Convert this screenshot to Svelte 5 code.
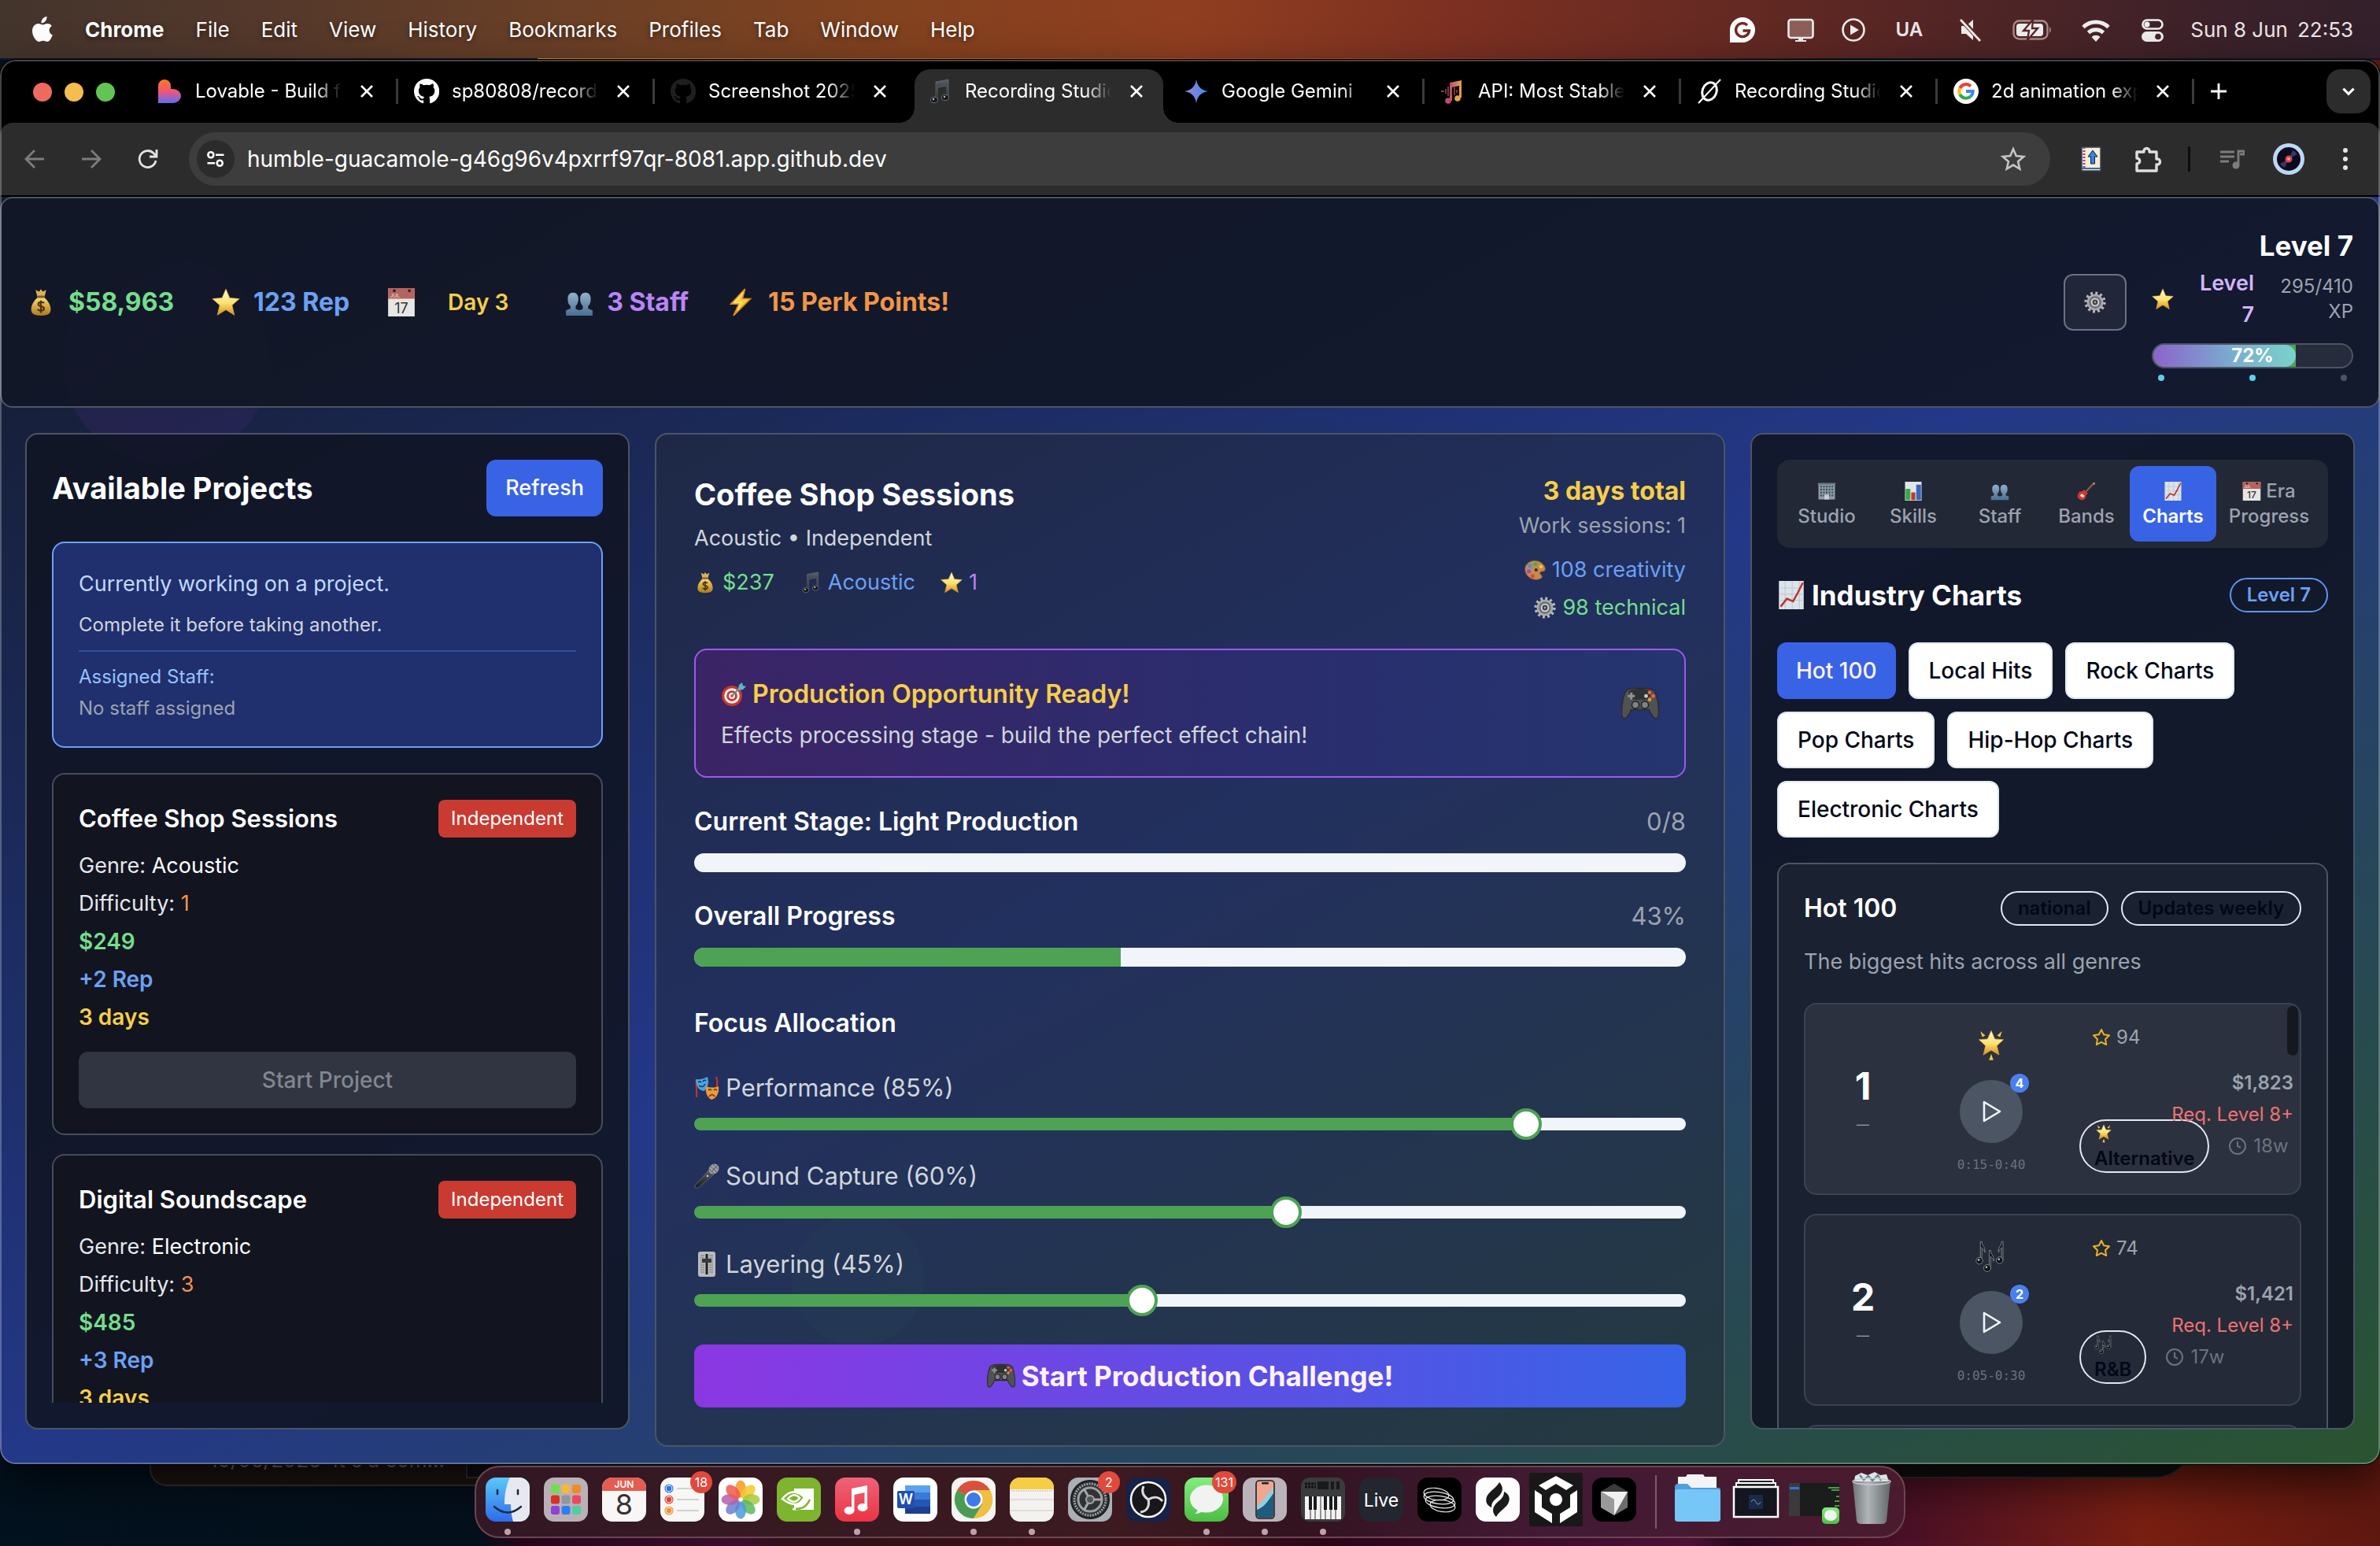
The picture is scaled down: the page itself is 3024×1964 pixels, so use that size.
<script>
  const menus = ['File', 'Edit', 'View', 'History', 'Bookmarks', 'Profiles', 'Tab', 'Window', 'Help'];

  const tabs = [
    { icon: 'lovable', title: 'Lovable - Build for' },
    { icon: 'github', title: 'sp80808/recording' },
    { icon: 'github-dim', title: 'Screenshot 2025-06' },
    { icon: 'note', title: 'Recording Studio Ty', active: true },
    { icon: 'gemini', title: 'Google Gemini' },
    { icon: 'note-color', title: 'API: Most Stable Di' },
    { icon: 'slash', title: 'Recording Studio Ty' },
    { icon: 'google', title: '2d animation explor' }
  ];

  const projects = [
    { title: 'Coffee Shop Sessions', genre: 'Acoustic', difficulty: 1, pay: '$249', rep: '+2 Rep', days: '3 days' },
    { title: 'Digital Soundscape', genre: 'Electronic', difficulty: 3, pay: '$485', rep: '+3 Rep', days: '3 days' }
  ];

  let sliders = $state([
    { id: 'performance', icon: 'masks', label: 'Performance', value: 85 },
    { id: 'capture', icon: 'mic', label: 'Sound Capture', value: 60 },
    { id: 'layering', icon: 'fader', label: 'Layering', value: 45 }
  ]);

  const sections = [
    { icon: 'building', label: 'Studio' },
    { icon: 'bars', label: 'Skills' },
    { icon: 'people', label: 'Staff' },
    { icon: 'guitar', label: 'Bands' },
    { icon: 'chart', label: 'Charts', active: true },
    { icon: 'calendar', label: 'Progress', lead: 'Era' }
  ];

  const charts = ['Hot 100', 'Local Hits', 'Rock Charts', 'Pop Charts', 'Hip-Hop Charts', 'Electronic Charts'];

  const entries = [
    { rank: 1, art: 'glow', badge: 4, time: '0:15-0:40', score: 94, price: '$1,823', genre: 'Alternative', weeks: '18w', top: true },
    { rank: 2, art: 'notes', badge: 2, time: '0:05-0:30', score: 74, price: '$1,421', genre: 'R&B', weeks: '17w' },
    { rank: 3, art: 'glow', badge: 3, time: '0:10-0:35', score: 71, price: '$1,305', genre: 'Pop', weeks: '12w' }
  ];

  const dock = [
    { id: 'finder', open: true },
    { id: 'launchpad' },
    { id: 'cal' },
    { id: 'reminders', badge: '18' },
    { id: 'photos' },
    { id: 'nvidia' },
    { id: 'music', open: true },
    { id: 'word' },
    { id: 'chrome', open: true },
    { id: 'notesapp', open: true },
    { id: 'settings', badge: '2' },
    { id: 'obs' },
    { id: 'messages', badge: '131', open: true },
    { id: 'iphone', open: true },
    { id: 'midi', open: true },
    { id: 'live' },
    { id: 'rings' },
    { id: 'splice' },
    { id: 'hexa' },
    { id: 'cursor' }
  ];
  const dockRight = ['folder', 'stack', 'miniwin', 'trash'];
  const petals = [
    ['#f59a23', 0], ['#f2c928', 45], ['#a9c93b', 90], ['#5cb85f', 135],
    ['#4a9bdc', 180], ['#6d7fd0', 225], ['#b45fae', 270], ['#ec5a4c', 315]
  ];
  const padTiles = ['#6ee04f', '#f5b83a', '#ef8b2c', '#d93025', '#8d979f', '#f0465c', '#9340d6', '#2f7df2', '#4fcfa0'];
</script>

{#snippet ico(id, size)}
  <svg class="ico {size}" viewBox="0 0 32 32" aria-hidden="true"><use href="#{id}" /></svg>
{/snippet}

<svg class="sprite" aria-hidden="true">
  <defs>
    <linearGradient id="gGold" x1="0" y1="0" x2="0" y2="1"><stop offset="0" stop-color="#f6dc8a" /><stop offset=".5" stop-color="#d7a83f" /><stop offset="1" stop-color="#a97b24" /></linearGradient>
    <linearGradient id="gStar" x1="0" y1="0" x2="0" y2="1"><stop offset="0" stop-color="#fffbe0" /><stop offset=".55" stop-color="#fbe06a" /><stop offset="1" stop-color="#d98a1e" /></linearGradient>
    <linearGradient id="gPeople" x1="0" y1="0" x2="0" y2="1"><stop offset="0" stop-color="#93b0c9" /><stop offset="1" stop-color="#4a6f92" /></linearGradient>
    <linearGradient id="gLov" x1="0" y1="0" x2="0" y2="1"><stop offset="0" stop-color="#ff7a1a" /><stop offset=".5" stop-color="#f0567a" /><stop offset="1" stop-color="#5d6cf5" /></linearGradient>
    <linearGradient id="gGem" x1="0" y1="0" x2="1" y2="0"><stop offset="0" stop-color="#9a7fd6" /><stop offset="1" stop-color="#3f8ef0" /></linearGradient>
    <linearGradient id="gNote" x1="0" y1="0" x2="1" y2="0"><stop offset="0" stop-color="#c04a70" /><stop offset="1" stop-color="#e8a04a" /></linearGradient>
    <linearGradient id="gDark" x1="0" y1="0" x2="0" y2="1"><stop offset="0" stop-color="#5a6068" /><stop offset="1" stop-color="#15181c" /></linearGradient>
    <linearGradient id="gFinder" x1="0" y1="0" x2="0" y2="1"><stop offset="0" stop-color="#5ac8fa" /><stop offset="1" stop-color="#2f6bea" /></linearGradient>
    <linearGradient id="gMusic" x1="0" y1="0" x2="0" y2="1"><stop offset="0" stop-color="#f0637a" /><stop offset="1" stop-color="#ea3342" /></linearGradient>
    <linearGradient id="gGreen" x1="0" y1="0" x2="0" y2="1"><stop offset="0" stop-color="#83ee80" /><stop offset="1" stop-color="#4dbd43" /></linearGradient>
    <linearGradient id="gTrash" x1="0" y1="0" x2="1" y2="0"><stop offset="0" stop-color="#6f7478" /><stop offset=".4" stop-color="#b0b5b8" /><stop offset="1" stop-color="#63676a" /></linearGradient>

    <symbol id="moneybag" viewBox="0 0 32 32"><path d="M10 2l4 2 2-3 2 3 4-2-2 8h-8z" fill="#d9b35a" /><path d="M13 10h6c5 4 8 9 8 14 0 5-3 7-11 7S5 29 5 24c0-5 3-10 8-14z" fill="url(#gGold)" /><rect x="12" y="8.500" width="8" height="2.500" rx="1" fill="#8a5a22" /><path d="M19.500 17c-.7-1.500-6.500-2-6.500 1.200 0 3 6.500 1.700 6.500 4.800 0 3.200-6.300 2.700-7 .8M16 14v14" fill="none" stroke="#4b3510" stroke-width="1.900" /></symbol>
    <symbol id="star" viewBox="0 0 32 32"><path d="M16 1l4.300 10 11 1-8.300 7.300 2.600 11.200L16 24.500l-9.600 6 2.600-11.200L.7 12l11-1z" fill="url(#gStar)" stroke="#e5a93a" stroke-width=".6" /></symbol>
    <symbol id="glow" viewBox="0 0 32 32"><path d="M16 1l3.700 8.500 8.800.6-6.700 6.300 2.200 9.300-8-4.800-8 4.800 2.200-9.300-6.700-6.300 8.800-.6z" fill="url(#gStar)" stroke="#e5a93a" stroke-width=".5" /><path d="M5 1.500l5 4.500-3 1.500zM27 1.500l-5 4.500 3 1.500zM16 24.500l2.200 6.500h-4.400z" fill="#f2c84b" /></symbol>
    <symbol id="calendar" viewBox="0 0 32 32"><rect x="1" y="0" width="30" height="32" fill="#e6e6e4" /><path d="M1 0h30v12H1z" fill="#b4645f" /><circle cx="8" cy="3" r="1.600" fill="#3b1c1c" /><circle cx="25" cy="3" r="1.600" fill="#3b1c1c" /><text x="3" y="11" font-family="Inter, sans-serif" font-size="6" fill="#f3dada">JUL</text><text x="16" y="28" text-anchor="middle" font-family="Inter, sans-serif" font-size="16" fill="#333">17</text></symbol>
    <symbol id="people" viewBox="0 0 32 32"><g fill="url(#gPeople)"><path d="M9 5c4 0 6 3 6 7s-1.500 7-3 8v3.500l4 1.500V31H1v-6l5-2v-3c-2-1-3-4-3-8s2-7 6-7z" /><path d="M23 5c4 0 6 3 6 7s-1 7-3 8v3l5 2v6H16v-6l4-1.500V20c-1.500-1-3-4-3-8s2-7 6-7z" /></g></symbol>
    <symbol id="bolt" viewBox="0 0 32 32"><path d="M21 1L5 18h9L8 31 27 12h-9z" fill="#f8cf3d" stroke="#e08a1e" stroke-width="1.500" /><path d="M19 5L9 16h7l-3 9" fill="none" stroke="#fff3a8" stroke-width="1" /></symbol>
    <symbol id="gear" viewBox="0 0 32 32"><circle cx="16" cy="16" r="13" fill="none" stroke="#b9bbbe" stroke-width="5" stroke-dasharray="3.200 3.600" /><circle cx="16" cy="16" r="12" fill="#a9abae" /><circle cx="16" cy="16" r="9" fill="#707276" /><circle cx="16" cy="16" r="5" fill="#3d4046" stroke="#d7d9db" stroke-width="2.200" /><circle cx="16" cy="16" r="1.600" fill="#9a9ca0" /></symbol>
    <symbol id="note" viewBox="0 0 32 32"><path d="M11 4l16-3v22.500h-2V9L13 11v16h-2z" fill="url(#gDark)" stroke="#6b7078" stroke-width=".7" /><ellipse cx="9" cy="27" rx="4.500" ry="3.600" fill="#15181c" stroke="#7b8088" stroke-width=".8" /><ellipse cx="23" cy="24" rx="4.500" ry="3.600" fill="#15181c" stroke="#7b8088" stroke-width=".8" /><circle cx="8" cy="26" r="1.200" fill="#b9bec6" /><circle cx="22" cy="23" r="1.200" fill="#b9bec6" /></symbol>
    <symbol id="notes" viewBox="0 0 32 32"><g fill="#111419" stroke="#7d838c" stroke-width=".8"><path d="M5 1h1.500c0 5 4 5 3 11-1-4-3-4-3-5v13H5zM28 1h-1.500c0 5-4 5-3 11 1-4 3-4 3-5v13H28zM14 10h1.500c0 5 4 5 3 11-1-4-3-4-3-5v12H14z" /><circle cx="4" cy="20.500" r="3.400" /><circle cx="24.500" cy="20" r="3.400" /><circle cx="12" cy="28" r="3.600" /></g><g fill="#c9ced6"><circle cx="3.300" cy="19.500" r="1" /><circle cx="23.800" cy="19" r="1" /><circle cx="11.200" cy="27" r="1" /></g></symbol>
    <symbol id="palette" viewBox="0 0 32 32"><path d="M13 3C4 5 0 12 3 20c3 8 13 12 20 9 6-2 3-5 1-7s1-4 4-4c4 0 4-5 1-9-4-5-10-7-16-6z" fill="#c88a4a" stroke="#9a6430" stroke-width="1" /><circle cx="9" cy="10" r="3" fill="#3f8ef0" /><circle cx="17" cy="7.500" r="3" fill="#45b04c" /><circle cx="25" cy="11.500" r="2.600" fill="#f2c53d" /><circle cx="7.500" cy="18" r="3" fill="#8a4fd0" /><circle cx="13" cy="25" r="3" fill="#e0483c" /><circle cx="18" cy="16" r="2.400" fill="#26304f" /></symbol>
    <symbol id="target" viewBox="0 0 32 32"><circle cx="14" cy="18" r="13" fill="#c8372c" /><circle cx="14" cy="18" r="9.800" fill="#f5efec" /><circle cx="14" cy="18" r="6.800" fill="#c8372c" /><circle cx="14" cy="18" r="4" fill="#f5efec" /><circle cx="14" cy="18" r="1.800" fill="#c8372c" /><path d="M14 18L26 6" stroke="#5b8b96" stroke-width="2" /><path d="M22 9l1-5 4-3 1 4 4 1-4 4-5 1z" fill="#57b6c9" /></symbol>
    <symbol id="gamepad" viewBox="0 0 32 32"><path d="M4 5c4-3 8-2 12-2s8-1 12 2c3 5 4 15 3.500 21-1 5-5 2-8-5h-15c-3 7-7 10-8 5C0 20 1 10 4 5z" fill="#505153" stroke="#2b2c2e" stroke-width="1" /><path d="M6 5.500c4-3 16-3 20 0l-3 7H9z" fill="#303133" /><path d="M8.500 6.500v6M5.500 9.500h6" stroke="#8f9193" stroke-width="2" /><circle cx="24" cy="6.500" r="1.600" fill="#f0603c" /><circle cx="27" cy="9.500" r="1.600" fill="#f0603c" /><circle cx="24" cy="12.500" r="1.600" fill="#e8903c" /><circle cx="21" cy="9.500" r="1.600" fill="#c8ccd0" /><circle cx="12" cy="17" r="3" fill="#808284" stroke="#222" /><circle cx="20" cy="17" r="3" fill="#808284" stroke="#222" /></symbol>
    <symbol id="masks" viewBox="0 0 32 32"><path d="M3 5c-1 8 1 14 0 23M28 2c3 6 0 12 1 20" fill="none" stroke="#b8392d" stroke-width="2.200" /><path d="M2 5c6 1 10-1 15-3 2 7 1 15-5 18C5 19 2 12 2 5z" fill="#4ba3e0" /><path d="M5 9q2-2 4 0M11 8q2-3 4-1M6 13q5 4 8-2" fill="none" stroke="#153a5a" stroke-width="1.500" /><path d="M15 14c5 2 10 2 16 0 1 8-2 15-9 17-6-3-8-10-7-17z" fill="#ee9a3a" /><path d="M18 19q2-2 4 0M25 19q2-2 4 0M19 27q4-5 7 0" fill="none" stroke="#5c3210" stroke-width="1.500" /></symbol>
    <symbol id="mic" viewBox="0 0 32 32"><path d="M19 8l6 6L5 31H1v-3z" fill="url(#gDark)" stroke="#6a6d72" stroke-width=".8" /><ellipse cx="25" cy="7" rx="7" ry="6" transform="rotate(-45 25 7)" fill="#9a9da1" /><path d="M19 7l6 6M20 3l9 8M24 1l6 6M22 11l8-9" stroke="#4c4f54" stroke-width=".9" /><circle cx="17" cy="16" r="1.200" fill="#dcdcdc" /></symbol>
    <symbol id="fader" viewBox="0 0 32 32"><rect x="5" y="0" width="22" height="32" rx="3" fill="#b9bcbd" /><path d="M8 5h5M8 8h5M8 11h5M8 14h5M8 17h5M8 20h5M8 23h5M8 26h5M19 5h5M19 8h5M19 11h5M19 14h5M19 17h5M19 20h5M19 23h5M19 26h5" stroke="#77797b" /><path d="M16 3v26" stroke="#222" stroke-width="3" /><rect x="10" y="9" width="12" height="5" rx="1" fill="#393b3d" /></symbol>
    <symbol id="building" viewBox="0 0 32 32"><path d="M2 3h28v27H2z" fill="#8e9da5" /><path d="M1 2h30v3H1z" fill="#697881" /><path d="M5 8h22M5 13h22M5 18h22M5 23h22" stroke="#3b515e" stroke-width="3" stroke-dasharray="3 1.800" /><path d="M12 22h8v8h-8z" fill="#c5cdd1" /></symbol>
    <symbol id="bars" viewBox="0 0 32 32"><path d="M2 0h28v32H2z" fill="#dfe6ea" /><path d="M3 12h8v19H3z" fill="#39a845" /><path d="M12.500 18h7v13h-7z" fill="#c8372c" /><path d="M21 5h8v26h-8z" fill="#3568b8" /></symbol>
    <symbol id="guitar" viewBox="0 0 32 32"><path d="M13 19L29 2" stroke="#8a6248" stroke-width="2.600" /><path d="M27 1l4 1-2 4z" fill="#c89f7c" /><path d="M4 17c3-2 4 1 7-3 2-1 3 1 3 3l3 1c2 1 2 3-1 4-2 3 0 6-4 8-6 3-12-2-11-7 1-3 2-4 3-6z" fill="#d5342f" /><path d="M8 20l5 4-3 3-5-3z" fill="#f0e4dc" /></symbol>
    <symbol id="chart" viewBox="0 0 32 32"><path d="M2 0h28v32H2z" fill="#dce4ea" /><path d="M2 8h28M2 15h28M2 22h28M9 0v32M17 0v32M25 0v32" stroke="#bcc8d0" /><path d="M4 29l7-9 7 3 5-9 6-12" fill="none" stroke="#c0322c" stroke-width="2.200" /></symbol>

    <symbol id="lovable" viewBox="0 0 32 32"><path d="M1 31V9a8 8 0 0 1 16 0v4h3a10 9 0 0 1 10 9 10 9 0 0 1-10 9z" fill="url(#gLov)" /></symbol>
    <symbol id="github" viewBox="0 0 32 32"><path fill="#fff" d="M16 0a16 16 0 0 0-5 31.200c.8.100 1.100-.4 1.100-.8v-3c-4.500 1-5.400-1.900-5.400-1.900-.7-1.900-1.800-2.400-1.800-2.400-1.400-1 .1-1 .1-1 1.600.100 2.500 1.700 2.500 1.700 1.400 2.400 3.700 1.700 4.700 1.300.1-1 .5-1.700 1-2.100-3.600-.4-7.300-1.800-7.300-7.900 0-1.800.6-3.200 1.700-4.300-.2-.4-.7-2 .1-4.200 0 0 1.400-.5 4.400 1.600a15 15 0 0 1 8 0c3-2.100 4.400-1.600 4.400-1.600.8 2.200.3 3.800.1 4.200 1 1.100 1.700 2.500 1.700 4.300 0 6.200-3.800 7.500-7.300 7.900.6.500 1.100 1.500 1.100 3v4.400c0 .4.300.9 1.100.8A16 16 0 0 0 16 0z" /></symbol>
    <symbol id="github-dim" viewBox="0 0 32 32"><g opacity=".12"><use href="#github" width="32" height="32" /></g></symbol>
    <symbol id="gemini" viewBox="0 0 32 32"><path d="M16 1c1.500 9 6 13.500 15 15-9 1.500-13.500 6-15 15-1.500-9-6-13.500-15-15 9-1.500 13.500-6 15-15z" fill="url(#gGem)" /></symbol>
    <symbol id="note-color" viewBox="0 0 32 32"><path d="M12 5l15-3v22h-3V9l-9 2v17h-3z" fill="url(#gNote)" /><circle cx="10" cy="28" r="3.800" fill="#c04a70" /><circle cx="22" cy="25" r="3.800" fill="#e8a04a" /><path d="M1 16h4M7 13v6M10 10v12M14 13v8M18 11v10M21 14v4" stroke="#a8505a" stroke-width="1.400" /></symbol>
    <symbol id="slash" viewBox="0 0 32 32"><path d="M30 1L2 31" stroke="#fff" stroke-width="2" /><ellipse cx="16" cy="16" rx="9" ry="11.500" transform="rotate(20 16 16)" fill="none" stroke="#fff" stroke-width="3" /></symbol>
    <symbol id="google" viewBox="0 0 32 32"><circle cx="16" cy="16" r="16" fill="#fff" /><g fill="none" stroke-width="4"><path d="M22 9.500A8.700 8.700 0 0 0 8.200 12" stroke="#ea4335" /><path d="M8.200 12a8.700 8.700 0 0 0 0 8" stroke="#fbbc05" /><path d="M8.200 20a8.700 8.700 0 0 0 13.600 2.500" stroke="#34a853" /><path d="M21.800 22.500A8.500 8.500 0 0 0 24.700 16H16" stroke="#4285f4" /></g></symbol>
  </defs>
</svg>

<div class="desktop">
  <header class="menubar">
    <nav class="menus" aria-label="Application menu">
      <svg class="apple" viewBox="0 0 28 34" aria-hidden="true"><path fill="#fff" d="M19.500 0c.3 2.400-.7 4.400-2 5.900-1.400 1.500-3.200 2.500-5 2.300-.3-2.200.8-4.400 2-5.700C15.800 1.100 17.900.1 19.500 0zM25.800 12c-2 1.300-3.200 3-3.200 5.400 0 2.800 1.700 5 4.200 6-1 3-3.800 8.600-6.900 8.600-2 0-2.600-1.200-5-1.200S11.600 32 9.800 32C5.600 32 1 24.500 1 18.500 1 12.500 4.700 9 8.700 9c2.300 0 4.100 1.500 5.600 1.500C15.700 10.500 17.900 9 20.500 9c2.200 0 4.200 1.200 5.300 3z" /></svg>
      <a class="app" href="#chrome">Chrome</a>
      {#each menus as m}<a href="#{m}">{m}</a>{/each}
    </nav>
    <div class="status">
      <svg class="st g" viewBox="0 0 34 34" aria-hidden="true"><path d="M17 1a16 16 0 1 1 0 32H1V17A16 16 0 0 1 17 1z" fill="#fff" /><path d="M23 11a8.500 8.500 0 1 0 2.500 7h-8" fill="none" stroke="#6e2d22" stroke-width="3.400" /></svg>
      <svg class="st d" viewBox="0 0 34 34" aria-hidden="true"><rect x="1.500" y="4" width="31" height="23" rx="3" fill="#8c5f58" stroke="#eee" stroke-width="2.600" /><path d="M14 27h6v3h4v2H10v-2h4z" fill="#eee" /></svg>
      <svg class="st p" viewBox="0 0 34 34" aria-hidden="true"><circle cx="17" cy="17" r="13.500" fill="none" stroke="#eee" stroke-width="2.600" /><path d="M13 10.500L24 17l-11 6.500z" fill="#eee" /></svg>
      <span class="ua">UA</span>
      <svg class="st m" viewBox="0 0 34 34" aria-hidden="true"><path d="M5 12h6l9-8v26l-9-8H5z" fill="#eee" /><path d="M4 3l26 28" stroke="#5d2823" stroke-width="6" /><path d="M4 4l25 27" stroke="#eee" stroke-width="2.600" /></svg>
      <svg class="st b" viewBox="0 0 52 34" aria-hidden="true"><rect x="1.500" y="5.500" width="43" height="23" rx="7" fill="none" stroke="#a98a86" stroke-width="2.400" /><path d="M47 13q4 4 0 8z" fill="#a98a86" /><rect x="5" y="9" width="34" height="16" rx="4" fill="#eee" /><path d="M26 4L14 18h7l-2 12 13-15h-7z" fill="#eee" stroke="#57252a" stroke-width="2.400" /></svg>
      <svg class="st w" viewBox="0 0 36 34" aria-hidden="true"><g fill="none" stroke="#eee" stroke-width="5"><path d="M2 13.500a23 23 0 0 1 32 0" /><path d="M8.500 20.500a14 14 0 0 1 19 0" /></g><path d="M18 32l-5.500-6a8 8 0 0 1 11 0z" fill="#eee" /></svg>
      <svg class="st c" viewBox="0 0 28 34" aria-hidden="true"><rect x="1.500" y="4.500" width="25" height="11" rx="5.500" fill="none" stroke="#eee" stroke-width="2.600" /><circle cx="7" cy="10" r="3.500" fill="#eee" /><rect x="0" y="19" width="28" height="13" rx="6.500" fill="#eee" /><circle cx="21" cy="25.500" r="3.800" fill="#4b2428" /></svg>
      <time class="clock"><span>Sun 8 Jun</span><span>22:53</span></time>
    </div>
  </header>

  <div class="back-note"><span>10/06/2025&nbsp; It's a com…</span></div>
  <div class="back-window"></div>

  <div class="window">
    <div class="tabstrip">
      <div class="lights"><i class="red"></i><i class="amber"></i><i class="green"></i></div>
      {#each tabs as t, i}
        <div class="tab" class:active={t.active} class:nosep={t.active || tabs[i + 1]?.active}>
          {@render ico(t.icon, 'i32')}
          <span class="tab-title">{t.title}</span>
          <button class="close" aria-label="Close tab"><svg viewBox="0 0 20 20" aria-hidden="true"><path d="M3 3l14 14M17 3L3 17" stroke="#fff" stroke-width="2.600" /></svg></button>
        </div>
      {/each}
      <button class="newtab" aria-label="New tab"><svg viewBox="0 0 22 22" aria-hidden="true"><path d="M11 1v20M1 11h20" stroke="#fff" stroke-width="2.800" /></svg></button>
      <button class="tabmenu" aria-label="Search tabs"><svg viewBox="0 0 20 20" aria-hidden="true"><path d="M4 7l6 6 6-6" fill="none" stroke="#fff" stroke-width="2.800" /></svg></button>
    </div>

    <div class="toolbar">
      <button class="nav dim" aria-label="Back"><svg viewBox="0 0 32 32" aria-hidden="true"><path d="M28 16H6M16 5L5 16l11 11" /></svg></button>
      <button class="nav dim" aria-label="Forward"><svg viewBox="0 0 32 32" aria-hidden="true"><path d="M4 16h22M16 5l11 11-11 11" /></svg></button>
      <button class="nav" aria-label="Reload"><svg viewBox="0 0 32 32" aria-hidden="true"><path d="M26 18a10.500 10.500 0 1 1-3-9.500l4 4M27 4v9h-9" /></svg></button>
      <div class="omnibox">
        <button class="tune" aria-label="Site settings"><svg viewBox="0 0 32 32" aria-hidden="true"><g fill="none" stroke="#fff" stroke-width="3"><circle cx="9" cy="10" r="4" /><path d="M16 10h12M4 22h11" /><circle cx="22" cy="22" r="4" /></g></svg></button>
        <input type="text" aria-label="Address" value="humble-guacamole-g46g96v4pxrrf97qr-8081.app.github.dev" />
        <button class="fav" aria-label="Bookmark"><svg viewBox="0 0 32 32" aria-hidden="true"><path d="M16 4l3.500 8.300 9 .8-6.800 5.900 2.100 8.800-7.800-4.700-7.800 4.700 2.100-8.800-6.800-5.900 9-.8z" fill="none" stroke="#c6c6c6" stroke-width="2.400" /></svg></button>
      </div>
      <div class="ext">
        <svg class="e1" viewBox="0 0 32 32" aria-hidden="true"><rect x="4" y="1" width="24" height="30" fill="#f8ecd6" stroke="#345" stroke-width="1.500" /><path d="M7 1v26" stroke="#8a4a80" stroke-width="3" stroke-dasharray="2 2" /><path d="M4 28h24" stroke="#3a6ea5" stroke-width="2" /><path d="M18 5l6 8h-3.500v9h-5v-9H12z" fill="#2f86e8" stroke="#123" stroke-width="1" /></svg>
        <svg class="e2" viewBox="0 0 36 36" aria-hidden="true"><path d="M4 9h9c-1-6 8-6 7 0h9v9c6-1 6 8 0 7v8H4v-9c5 0 5-7 0-7z" fill="none" stroke="#dedede" stroke-width="3.400" stroke-linejoin="round" /></svg>
        <i class="rule"></i>
        <svg class="e3" viewBox="0 0 32 32" aria-hidden="true"><path d="M1 7h18M1 13h18M1 19h11" stroke="#7c7c7c" stroke-width="2.800" /><circle cx="21" cy="24" r="4.500" fill="#7c7c7c" /><path d="M24 24V6h7v4h-5" fill="none" stroke="#7c7c7c" stroke-width="2.800" /></svg>
        <svg class="e4" viewBox="0 0 40 40" aria-hidden="true"><circle cx="20" cy="20" r="20" fill="#bcd8f7" /><circle cx="20" cy="20" r="15" fill="#0b0a1e" /><path d="M20 20l5-11a12 12 0 0 1 6 5zM20 20l-5 11a12 12 0 0 1-6-5z" fill="#39375a" /><circle cx="20" cy="20" r="4.500" fill="#d9405f" /><circle cx="20" cy="20" r="1.800" fill="#f8c05a" /></svg>
        <svg class="e5" viewBox="0 0 8 32" aria-hidden="true"><g fill="#e6e6e6"><circle cx="4" cy="5" r="3" /><circle cx="4" cy="16" r="3" /><circle cx="4" cy="27" r="3" /></g></svg>
      </div>
    </div>

    <div class="page">
      <i class="orb one"></i>
      <i class="orb two"></i>
      <header class="hud">
        <div class="stats">
          <div class="stat money">{@render ico('moneybag', 'i36')}<b>$58,963</b></div>
          <div class="stat rep">{@render ico('star', 'i36')}<b>123 Rep</b></div>
          <div class="stat day">{@render ico('calendar', 'i36')}<button>Day 3</button></div>
          <div class="stat staff">{@render ico('people', 'i36')}<b>3 Staff</b></div>
          <div class="stat perk">{@render ico('bolt', 'i36')}<b>15 Perk Points!</b></div>
        </div>
        <div class="level">
          <button class="cog" aria-label="Settings">{@render ico('gear', 'i28')}</button>
          <div class="level-box">
            <h2>Level 7</h2>
            <div class="level-row">
              {@render ico('star', 'i28')}
              <span class="lv">Level<br />7</span>
              <span class="xp">295/410<br />XP</span>
            </div>
            <div class="xpbar" role="progressbar" aria-valuenow="72" aria-label="Experience"><div class="xpunder" style="width:72%"><div class="xpfill"></div></div><span>72%</span></div>
            <div class="dots"><i></i><i></i><i class="off"></i></div>
          </div>
        </div>
      </header>

      <main>
        <section class="panel left">
          <div class="row head">
            <h2>Available Projects</h2>
            <button class="primary">Refresh</button>
          </div>
          <div class="scroller">
            <div class="working">
              <p class="w1">Currently working on a project.</p>
              <p class="w2">Complete it before taking another.</p>
              <div class="assigned">
                <p class="w3">Assigned Staff:</p>
                <p class="w4">No staff assigned</p>
              </div>
            </div>
            <div class="cards">
              {#each projects as p}
                <article class="card">
                  <div class="row">
                    <h3>{p.title}</h3>
                    <span class="tag">Independent</span>
                  </div>
                  <div class="facts">
                    <p>Genre: <span class="white">{p.genre}</span></p>
                    <p>Difficulty: <span class="orange">{p.difficulty}</span></p>
                    <p class="gain">{p.pay}</p>
                    <p class="blue">{p.rep}</p>
                    <p class="yellow">{p.days}</p>
                  </div>
                  <button class="start" disabled>Start Project</button>
                </article>
              {/each}
            </div>
          </div>
        </section>

        <section class="panel mid">
          <div class="mid-head">
            <div>
              <h2>Coffee Shop Sessions</h2>
              <p class="sub">Acoustic • Independent</p>
              <div class="chips">
                <span class="c-green">{@render ico('moneybag', 'i28')}$237</span>
                <span class="c-blue">{@render ico('note', 'i28')}Acoustic</span>
                <span class="c-purple">{@render ico('star', 'i28')}1</span>
              </div>
            </div>
            <div class="totals">
              <p class="total">3 days total</p>
              <p class="work">Work sessions: 1</p>
              <p class="cre">{@render ico('palette', 'i28')}108 creativity</p>
              <p class="tec">{@render ico('gear', 'i28')}98 technical</p>
            </div>
          </div>

          <div class="opportunity">
            <div>
              <h3>{@render ico('target', 'i32')}Production Opportunity Ready!</h3>
              <p>Effects processing stage - build the perfect effect chain!</p>
            </div>
            {@render ico('gamepad', 'i48')}
          </div>

          <div class="meter">
            <div class="row"><h4>Current Stage: Light Production</h4><span>0/8</span></div>
            <div class="bar" role="progressbar" aria-valuenow="0" aria-label="Current stage"><div style="width:0%"></div></div>
          </div>
          <div class="meter">
            <div class="row"><h4>Overall Progress</h4><span>43%</span></div>
            <div class="bar" role="progressbar" aria-valuenow="43" aria-label="Overall progress"><div style="width:43%"></div></div>
          </div>

          <h4 class="focus">Focus Allocation</h4>
          <div class="sliders">
            {#each sliders as s}
              <div class="slider">
                <label for={s.id}>{@render ico(s.icon, 'i32')}{s.label} ({s.value}%)</label>
                <input id={s.id} type="range" min="0" max="100" bind:value={s.value} style="--p:{s.value}%" />
              </div>
            {/each}
          </div>
          <button class="challenge">{@render ico('gamepad', 'i36')}Start Production Challenge!</button>
        </section>

        <section class="panel right">
          <nav class="sections">
            {#each sections as s}
              <button class:active={s.active}><span>{@render ico(s.icon, 'i24')}{s.lead ?? ''}</span><span>{s.label}</span></button>
            {/each}
          </nav>
          <div class="row charts-head">
            <h2>{@render ico('chart', 'i36')}Industry Charts</h2>
            <span class="pill level-pill">Level 7</span>
          </div>
          <div class="filters">
            {#each charts as c, i}<button class:on={i === 0}>{c}</button>{/each}
          </div>
          <div class="chart">
            <div class="row chart-title">
              <h3>Hot 100</h3>
              <div class="pills"><span class="pill">national</span><span class="pill">Updates weekly</span></div>
            </div>
            <p class="chart-sub">The biggest hits across all genres</p>
            <div class="entries">
              <i class="thumb"></i>
              {#each entries as e}
                <article class="entry" class:top={e.top}>
                  <div class="rank"><strong>{e.rank}</strong><span>—</span></div>
                  <div class="art">
                    {@render ico(e.art, 'i40')}
                    <button class="play" aria-label="Play preview">
                      <svg viewBox="0 0 32 32" aria-hidden="true"><path d="M7 4l20 12L7 28z" fill="none" stroke="#f1f5f9" stroke-width="2.600" stroke-linejoin="round" /></svg>
                      <i>{e.badge}</i>
                    </button>
                    <span class="time">{e.time}</span>
                  </div>
                  <div class="info">
                    <div class="score"><svg viewBox="0 0 24 24" aria-hidden="true"><path d="M12 2l3.100 6.300 6.900 1-5 4.900 1.200 6.900-6.200-3.300-6.200 3.300L7 14.200 2 9.300l6.900-1z" fill="none" stroke="#eab325" stroke-width="2" stroke-linejoin="round" /></svg>{e.score}</div>
                    <div class="meta">
                      <span class="genre">{@render ico(e.art, 'i24')}<span>{e.genre}</span></span>
                      <span class="weeks"><svg viewBox="0 0 24 24" aria-hidden="true"><g fill="none" stroke="#6b7280" stroke-width="2"><circle cx="12" cy="12" r="10" /><path d="M12 6v6l4 2" /></g></svg>{e.weeks}</span>
                    </div>
                  </div>
                  <div class="price"><b>{e.price}</b><span>Req. Level 8+</span></div>
                </article>
              {/each}
            </div>
          </div>
        </section>
      </main>
    </div>
  </div>

  <nav class="dock" aria-label="Dock">
    {#each dock as d}
      <button class="app-icon" class:open={d.open} aria-label={d.id}>
        <svg viewBox="0 0 56 56" aria-hidden="true">
          {#if d.id === 'finder'}
            <rect width="56" height="56" rx="13" fill="url(#gFinder)" /><path d="M31 0h12a13 13 0 0 1 13 13v30a13 13 0 0 1-13 13h-8c-2-7-3-14-3-22h-8c0-12 2-24 7-34z" fill="#e6eaf0" /><path d="M15 16v5M41 16v5" stroke="#1b2a44" stroke-width="2.600" stroke-linecap="round" /><path d="M11 37q17 15 34 0" fill="none" stroke="#1b2a44" stroke-width="2.400" stroke-linecap="round" />
          {:else if d.id === 'launchpad'}
            <rect width="56" height="56" rx="13" fill="#b9b1b6" />
            {#each padTiles as c, k}<rect x={9 + (k % 3) * 13.5} y={9 + Math.floor(k / 3) * 13.5} width="11" height="11" rx="3" fill={c} />{/each}
          {:else if d.id === 'cal'}
            <rect width="56" height="56" rx="13" fill="#f8f7f6" /><path d="M0 17V13A13 13 0 0 1 13 0h30a13 13 0 0 1 13 13v4z" fill="#e35d51" /><text x="28" y="13" text-anchor="middle" class="t-jun">JUN</text><text x="28" y="47" text-anchor="middle" class="t-8">8</text>
          {:else if d.id === 'reminders'}
            <rect width="56" height="56" rx="13" fill="#f7f7f5" /><path d="M21 14h28M21 28h28M21 42h28" stroke="#c4c6c8" stroke-width="1.500" />
            <g fill="#fff" stroke-width="1.200"><circle cx="11" cy="14" r="5" stroke="#2f74ea" /><circle cx="11" cy="28" r="5" stroke="#e0473a" /><circle cx="11" cy="42" r="5" stroke="#eb9234" /></g>
            <circle cx="11" cy="14" r="3.400" fill="#2f74ea" /><circle cx="11" cy="28" r="3.400" fill="#e0473a" /><circle cx="11" cy="42" r="3.400" fill="#eb9234" />
          {:else if d.id === 'photos'}
            <rect width="56" height="56" rx="13" fill="#fff" />
            {#each petals as [c, r]}<ellipse cx="28" cy="14.500" rx="7" ry="11" fill={c} opacity=".85" transform="rotate({r} 28 28)" />{/each}
          {:else if d.id === 'nvidia'}
            <rect width="56" height="56" rx="13" fill="#7db52e" /><path d="M22 14h25v27H22z" fill="#fff" /><path d="M7 27q13-16 28-2-9 17-28 2z" fill="#7db52e" stroke="#fff" stroke-width="2.500" /><path d="M14 27q8-9 15-1-6 9-15 1zM20 40q16 2 22-12" fill="none" stroke="#fff" stroke-width="2.500" /><path d="M24 40q13 0 18-12" fill="none" stroke="#7db52e" stroke-width="2.500" />
          {:else if d.id === 'music'}
            <rect width="56" height="56" rx="13" fill="url(#gMusic)" /><path d="M21 14l20-4v27h-3.500V19L24.500 22v20H21z" fill="#fff" /><ellipse cx="18" cy="42" rx="6.500" ry="5" fill="#fff" /><ellipse cx="35" cy="38" rx="6.500" ry="5" fill="#fff" />
          {:else if d.id === 'word'}
            <rect width="56" height="56" rx="13" fill="#fff" /><path d="M15 10h32v10H15z" fill="#5aa2ea" /><path d="M15 19h32v9H15z" fill="#3b79d8" /><path d="M15 28h32v9H15z" fill="#2457b5" /><path d="M15 37h32v9H15z" fill="#1c3f8f" /><rect x="5" y="17" width="22" height="22" rx="2" fill="#1f4fae" /><text x="16" y="34" text-anchor="middle" class="t-w">W</text>
          {:else if d.id === 'chrome'}
            <rect width="56" height="56" rx="13" fill="#f4f4f4" /><circle cx="28" cy="28" r="24" fill="#f0bf41" /><path d="M28 28L7.200 16A24 24 0 0 1 48.800 16z" fill="#d9503f" /><path d="M28 28L7.200 16A24 24 0 0 0 28 52l11-18z" fill="#4a9c54" /><path d="M48.800 16H28v12l11 6-11 18a24 24 0 0 0 20.800-36z" fill="#f0bf41" /><circle cx="28" cy="28" r="11.500" fill="#fff" /><circle cx="28" cy="28" r="9" fill="#3f7be8" />
          {:else if d.id === 'notesapp'}
            <rect width="56" height="56" rx="13" fill="#f3f2ee" /><path d="M0 15V13A13 13 0 0 1 13 0h30a13 13 0 0 1 13 13v2z" fill="#f6cd45" /><path d="M0 28h56M0 42h56" stroke="#c9c8c4" stroke-width="1" /><path d="M2 17h52" stroke="#a8a7a3" stroke-dasharray="1.500 1.500" />
          {:else if d.id === 'settings'}
            <rect width="56" height="56" rx="13" fill="#a9afb3" /><circle cx="28" cy="28" r="24" fill="#303234" stroke="#1c1d1f" stroke-width="2" /><circle cx="28" cy="28" r="20" fill="none" stroke="#a4a8ab" stroke-width="3" stroke-dasharray="1.800 1.500" /><circle cx="28" cy="28" r="15" fill="none" stroke="#9ba0a3" stroke-width="3" /><path d="M28 28h16M28 28L20 14M28 28l-8 14" stroke="#a4a8ab" stroke-width="3" /><circle cx="28" cy="28" r="5" fill="#54575a" stroke="#a4a8ab" stroke-width="2" />
          {:else if d.id === 'obs'}
            <rect width="56" height="56" rx="13" fill="#162248" /><circle cx="28" cy="28" r="22" fill="#17171c" stroke="#fff" stroke-width="2.500" /><g fill="none" stroke="#dcdcdc" stroke-width="3"><path d="M22 11c-3 7 0 13 6 17" /><path d="M46 30c-5-6-12-6-18-2" /><path d="M18 44c8-1 12-7 10-16" /></g>
          {:else if d.id === 'messages'}
            <rect width="56" height="56" rx="13" fill="url(#gGreen)" /><ellipse cx="28" cy="27" rx="21" ry="17.500" fill="#f1f3f1" /><path d="M17 38c0 4-1 6-4 8 6 0 9-2 11-5z" fill="#f1f3f1" />
          {:else if d.id === 'iphone'}
            <rect width="56" height="56" rx="13" fill="#bab4ba" /><rect x="17" y="4" width="23" height="48" rx="4" fill="#f0a690" stroke="#222" stroke-width="1.600" /><path d="M39 18v30q0 3-3 3H21q-3 0-3-3v-8c9-2 15-12 21-22z" fill="#1d5c7d" /><path d="M39 12v8c-7 10-12 18-21 21v-5c8-5 14-16 21-24z" fill="#8ed0e0" /><rect x="24" y="6" width="9" height="2.500" rx="1" fill="#222" />
          {:else if d.id === 'midi'}
            <rect width="56" height="56" rx="11" fill="#3a3b3d" /><path d="M5 8h14M5 12h14" stroke="#111" stroke-width="3" stroke-dasharray="3 1" /><rect x="21" y="5" width="14" height="10" fill="#181a1b" /><path d="M40 5v10M47 5v10" stroke="#181a1b" stroke-width="4" /><path d="M5 24h46v29H5z" fill="#f3f3f3" /><path d="M12 24v29M18 24v29M25 24v29M31 24v29M38 24v29M44 24v29" stroke="#333" stroke-width="1" /><path d="M12 24v17M18 24v17M31 24v17M38 24v17M44 24v17" stroke="#1b1b1b" stroke-width="4" />
          {:else if d.id === 'live'}
            <rect width="56" height="56" rx="13" fill="#23262e" /><text x="28" y="37" text-anchor="middle" class="t-live">Live</text>
          {:else if d.id === 'rings'}
            <rect width="56" height="56" rx="13" fill="#000" /><g fill="none" stroke="#eee" stroke-width="1.200"><ellipse cx="24" cy="21" rx="16" ry="7.500" transform="rotate(8 24 21)" /><ellipse cx="27" cy="26" rx="19" ry="7.500" transform="rotate(8 27 26)" /><ellipse cx="29" cy="31" rx="19" ry="7.500" transform="rotate(8 29 31)" /><ellipse cx="32" cy="36" rx="16" ry="7.500" transform="rotate(8 32 36)" /></g>
          {:else if d.id === 'splice'}
            <rect width="56" height="56" rx="13" fill="#fdfdfd" /><g fill="#1b1b1b"><path d="M30 6c6 6 5 13-2 19-5 4-8 7-8 13-7-3-9-10-4-17 5-6 11-9 14-15z" /><path d="M30 6c6 6 5 13-2 19-5 4-8 7-8 13-7-3-9-10-4-17 5-6 11-9 14-15z" transform="rotate(180 28 28)" /></g>
          {:else if d.id === 'hexa'}
            <rect x="-6" y="-6" width="68" height="68" rx="2" fill="#181818" /><g fill="#fff"><path d="M28-2l22 12-9 6-13-8-13 8-9-6z" /><path d="M1 16l9 6v16l13 8v12L1 44zM55 16l-9 6v16l-13 8v12l22-14z" /></g><circle cx="28" cy="28" r="14" fill="none" stroke="#181818" stroke-width="4" /><circle cx="28" cy="28" r="8" fill="#fff" />
          {:else if d.id === 'cursor'}
            <rect width="56" height="56" rx="13" fill="#000" /><path d="M28 8l17 10v20L28 48 11 38V18z" fill="#6d6d6d" /><path d="M28 8l17 10H11z" fill="#3a3a3a" /><path d="M11 18h34L28 48V28z" fill="#f0f0f0" /><path d="M11 18l17 10v20L11 38z" fill="#9a9a9a" />
          {/if}
        </svg>
        {#if d.badge}<span class="badge">{d.badge}</span>{/if}
      </button>
    {/each}
    <i class="divider"></i>
    {#each dockRight as id}
      <button class="app-icon" aria-label={id}>
        <svg viewBox="0 0 56 56" aria-hidden="true">
          {#if id === 'folder'}
            <path d="M3-1h10l2-3h20l2 3h15v20H3z" fill="#f4f4f4" /><path d="M-1 12q0-4 4-4h12l5 5h34q3 0 3 3v36q0 4-4 4H3q-4 0-4-4z" fill="#4d9fdd" /><path d="M-1 18q0-3 3-3h52q3 0 3 3v34q0 4-4 4H3q-4 0-4-4z" fill="#76c6f7" />
          {:else if id === 'stack'}
            <path d="M6 3h44v10H6z" fill="#222" stroke="#fff" stroke-width="2" /><path d="M3 7h50v10H3z" fill="#222" stroke="#fff" stroke-width="2" /><path d="M0 12h56v38H0z" fill="#14161f" stroke="#fff" stroke-width="2.500" /><rect x="19" y="22" width="18" height="18" fill="#1a2a48" /><path d="M22 31q3-6 6 0t6 0" fill="none" stroke="#7897b8" stroke-width="1" />
          {:else if id === 'miniwin'}
            <path d="M-4 7h64v42H-4z" fill="#1b1c1c" /><path d="M-4 7H10v42H-4z" fill="#3a3a3c" /><path d="M-3 12H9v3H-3z" fill="#2f74ea" /><path d="M46 13h14M50 16h10M56 24h4M54 30h6M54 36h6" stroke="#55c554" stroke-width="1.600" /><rect x="38" y="38" width="22" height="21" rx="5" fill="url(#gGreen)" /><ellipse cx="49" cy="48" rx="8" ry="7" fill="#f1f3f1" />
          {:else}
            <path d="M6-2l8-4 8 3 9-4 7 4 8-1 3 9H5z" fill="#dfe4e6" /><path d="M12-3l5 6 6-5 5 6 7-7 4 7" fill="none" stroke="#5a8090" stroke-width="2" /><path d="M3 5h48l-5 50q-1 4-6 4H14q-5 0-6-4z" fill="url(#gTrash)" /><ellipse cx="27" cy="5" rx="24" ry="4" fill="none" stroke="#c7cbcd" stroke-width="1.500" />
          {/if}
        </svg>
      </button>
    {/each}
  </nav>
</div>

<style>
  :global(body) { margin: 0; background: #04101c; }
  * { box-sizing: border-box; }
  h2, h3, h4, p { margin: 0; }
  button { font: inherit; color: inherit; border: 0; background: none; padding: 0; cursor: pointer; }
  .sprite { position: absolute; width: 0; height: 0; }
  .ico { display: block; flex: none; }
  .i24 { width: 24px; height: 24px; }
  .i28 { width: 28px; height: 28px; }
  .i32 { width: 32px; height: 32px; }
  .i36 { width: 36px; height: 36px; }
  .i40 { width: 40px; height: 40px; }
  .i48 { width: 48px; height: 72px; }
  .row { display: flex; align-items: center; justify-content: space-between; }

  .desktop {
    position: relative;
    display: flex;
    flex-direction: column;
    height: 100vh;
    overflow: hidden;
    font-family: Inter, "Liberation Sans", sans-serif;
    font-size: 27px;
    line-height: 40px;
    color: #fff;
    background: linear-gradient(90deg, #03121f 0, #04101c 20%, #26051a 22%, #3c0d2d 31%, #32101a 33%, #3f1118 50%, #2c051b 56%, #4a1236 71%, #2a0720 73%, #4a1026 80%, #7a1f12 90%, #5f1810 100%);
  }

  /* macOS menu bar */
  .menubar {
    display: flex;
    justify-content: space-between;
    align-items: center;
    height: 76px;
    padding: 0 34px 0 40px;
    font-size: 26px;
    line-height: 32px;
    background:
      linear-gradient(90deg, #0a1a30 0 22.600%, #d68a2a 22.600%, #b8402a 60%, #0c1a34 77%) bottom / 100% 2px no-repeat,
      linear-gradient(90deg, #43342c 0, #54382b 11%, #6b4026 24%, #83421f 38%, #903e20 50%, #7d3021 61%, #5c2723 77%, #3a212a 94%, #33202a 100%);
  }
  .menus { display: flex; align-items: center; gap: 40px; text-shadow: 0 2px 6px #0008; }
  .menus a { color: #fff; text-decoration: none; }
  .menus .app { font-weight: 700; }
  .apple { width: 28px; height: 34px; }
  .status { display: flex; align-items: center; color: #ede6e6; }
  .st { width: 34px; height: 34px; margin-right: 40px; }
  .st.d { margin-right: 33px; }
  .st.p { margin-right: 37px; }
  .ua { font-size: 24px; font-weight: 600; margin-right: 44px; }
  .st.m { margin-right: 36px; }
  .st.b { width: 52px; margin-right: 36px; }
  .st.w { width: 36px; }
  .st.c { width: 28px; margin-right: 34px; }
  .clock { display: flex; gap: 12px; }

  /* windows behind the browser */
  .back-note {
    position: absolute; left: 190px; bottom: 76px; width: 500px; height: 60px; overflow: hidden;
    padding: 5px 0 0 74px; border: 2px solid #3c322c; border-radius: 0 0 0 22px; background: #1b1512; color: #7b7672; font-size: 26px;
  }
  .back-window {
    position: absolute; left: 592px; right: 238px; bottom: 86px; height: 60px;
    border: 2px solid #37302e; border-radius: 0 0 48px 0; background: #131010;
  }

  /* browser window */
  .window {
    position: relative;
    display: flex;
    flex-direction: column;
    flex: 1;
    min-height: 0;
    margin-bottom: 104px;
    border-radius: 20px;
    overflow: hidden;
    background: #000;
    box-shadow: 0 0 0 1px #000, 0 24px 60px #000a;
  }
  .window::after { content: ""; position: absolute; inset: 0; border: 2px solid #fff4; border-radius: 20px; pointer-events: none; }
  .tabstrip { display: flex; align-items: flex-end; height: 80px; flex: none; background: #000; font-size: 24px; line-height: 32px; }
  .lights { display: flex; gap: 16px; width: 180px; height: 68px; padding: 17px 0 0 42px; flex: none; }
  .lights i { width: 24px; height: 24px; border-radius: 50%; }
  .red { background: #ee6a5f; }
  .amber { background: #f5bd4f; }
  .green { background: #61c454; }
  .tab { position: relative; display: flex; align-items: center; width: 326px; height: 68px; padding: 0 28px 12px 20px; }
  .tab::after { content: ""; position: absolute; right: 0; top: 12px; width: 3px; height: 32px; background: #3a3a3a; }
  .tab.nosep::after { display: none; }
  .tab.active { background: #2c2c2c; border-radius: 20px 20px 0 0; margin: 0 6px 0 4px; width: 316px; padding: 0 22px 12px 16px; }
  .tab.active::before {
    content: ""; position: absolute; left: -20px; right: -20px; bottom: 0; height: 20px;
    background:
      radial-gradient(circle at 0 0, transparent 20px, #2c2c2c 20px) left / 20px 20px no-repeat,
      radial-gradient(circle at 100% 0, transparent 20px, #2c2c2c 20px) right / 20px 20px no-repeat;
  }
  .tab-title { flex: 1; margin: 0 20px 0 16px; overflow: hidden; white-space: nowrap; -webkit-mask-image: linear-gradient(90deg, #000 82%, transparent); mask-image: linear-gradient(90deg, #000 82%, transparent); }
  .close { width: 24px; height: 24px; }
  .close svg { display: block; width: 20px; height: 20px; margin: 2px; }
  .newtab { width: 22px; height: 22px; margin: 0 0 29px 20px; }
  .newtab svg, .tabmenu svg { display: block; width: 22px; height: 22px; margin: auto; }
  .tabmenu { width: 56px; height: 56px; margin: 0 12px 12px auto; border-radius: 18px; background: #2c2c2c; }

  .toolbar { display: flex; align-items: center; height: 92px; flex: none; padding: 0 40px 0 28px; background: #2c2c2c; border-radius: 16px 16px 0 0; }
  .nav { width: 32px; height: 32px; margin-right: 40px; }
  .nav svg { display: block; width: 32px; height: 32px; fill: none; stroke: #e3e3e3; stroke-width: 2.800; }
  .nav.dim svg { stroke: #7d7d7d; }
  .nav:nth-child(3) { margin-right: 36px; }
  .omnibox { display: flex; align-items: center; flex: 1; height: 68px; padding: 0 30px 0 10px; border-radius: 34px; background: #3d3d3d; }
  .tune { width: 48px; height: 48px; border-radius: 50%; background: #2b2b2b; }
  .tune svg { display: block; width: 28px; height: 28px; margin: auto; }
  .omnibox input { flex: 1; min-width: 0; margin-left: 16px; padding: 0; border: 0; outline: 0; background: none; color: #fff; font: inherit; font-size: 28px; }
  .fav svg { display: block; width: 34px; height: 34px; }
  .ext { display: flex; align-items: center; }
  .e1 { width: 32px; height: 32px; margin: 0 38px 0 36px; }
  .e2 { width: 36px; height: 36px; margin-right: 33px; }
  .rule { width: 3px; height: 32px; background: #0d0d0d; }
  .e3 { width: 32px; height: 32px; margin: 0 36px 0 37px; }
  .e4 { width: 40px; height: 40px; margin-right: 48px; }
  .e5 { width: 8px; height: 32px; }

  /* game page */
  .page {
    position: relative;
    display: flex;
    flex-direction: column;
    flex: 1;
    min-height: 0;
    margin-top: 2px;
    background: linear-gradient(to bottom right, #141b2b, #233888 50%, #2a5430);
  }
  .orb { position: absolute; border-radius: 50%; }
  .orb.one { left: 79px; top: 76px; width: 264px; height: 264px; background: #7a2fb81f; }
  .orb.two { left: 1006px; top: 1292px; width: 168px; height: 168px; background: #4ade800d; }
  .hud {
    position: relative;
    display: flex;
    align-items: center;
    justify-content: space-between;
    padding: 32px;
    border: 2px solid #4b5563;
    border-radius: 16px;
    background: #111726ea;
  }
  .stats { display: flex; align-items: center; gap: 48px; font-size: 32px; }
  .stat { display: flex; align-items: center; gap: 17px; }
  .stat b { font-weight: 700; }
  .money { color: #74de8c; }
  .rep { color: #6ba1f4; }
  .day { color: #f7cf46; }
  .day button { padding: 0 24px; font-size: 28px; font-weight: 600; }
  .staff { color: #ba85f8; }
  .perk { color: #f09549; }
  .level { display: flex; align-items: center; gap: 32px; }
  .cog { display: grid; place-items: center; width: 80px; height: 72px; border: 2px solid #6b7280; border-radius: 12px; background: #212638; }
  .level-box { width: 256px; }
  .level-box h2 { text-align: right; font-size: 35px; line-height: 56px; font-weight: 700; }
  .level-row { display: flex; align-items: center; text-align: right; }
  .lv { width: 102px; color: #d3b5fb; font-weight: 600; font-size: 27px; line-height: 40px; }
  .xp { flex: 1; color: #9ca3af; font-size: 24px; line-height: 32px; }
  .xpbar { position: relative; height: 32px; margin-top: 16px; border: 2px solid #4b5563; border-radius: 16px; background: #272c3c; overflow: hidden; }
  .xpunder { height: 100%; background: #4ea254; }
  .xpfill { height: 100%; border-radius: 14px; background: linear-gradient(90deg, #8d63cb, #7aaccf 55%, #7ad2cb); }
  .xpbar span { position: absolute; inset: 0; text-align: center; font-size: 24px; line-height: 28px; font-weight: 700; }
  .dots { display: flex; justify-content: space-between; padding: 0 8px; margin-top: 8px; }
  .dots i { width: 8px; height: 8px; border-radius: 50%; background: #62cfea; }
  .dots .off { background: #4b5563; }

  main { position: relative; display: grid; grid-template-columns: 768px minmax(0, 1fr) 768px; gap: 32px; flex: 1; min-height: 0; padding: 32px 32px 22px; }
  .panel { border: 2px solid #4b5563; border-radius: 16px; min-height: 0; }
  .left, .right { display: flex; flex-direction: column; margin-bottom: 22px; overflow: hidden; background: #111524e8; }
  .left { padding: 32px; }
  .head { margin-bottom: 32px; flex: none; }
  .panel h2 { font-size: 38px; line-height: 56px; font-weight: 700; }
  .primary { height: 72px; padding: 0 24px; border-radius: 12px; background: #3963e5; font-size: 27px; font-weight: 500; }
  .scroller { flex: 1; min-height: 0; overflow: hidden; }
  .working { padding: 32px; border: 2px solid #6aa1f6; border-radius: 16px; background: #202f6e; margin-bottom: 32px; font-size: 24px; line-height: 32px; }
  .w1 { font-size: 27px; line-height: 40px; color: #c1d9fb; }
  .w2 { margin-top: 16px; color: #d1d5db; }
  .assigned { margin-top: 16px; padding-top: 16px; border-top: 2px solid #33509b; }
  .w3 { color: #97c2fb; }
  .w4 { margin-top: 8px; color: #9ca3af; }
  .cards { display: flex; flex-direction: column; gap: 24px; }
  .card { padding: 32px; border: 2px solid #454c5a; border-radius: 16px; background: #121420; }
  .card h3 { font-size: 31px; line-height: 48px; font-weight: 600; }
  .tag { padding: 0 16px; border-radius: 8px; background: #c93a31; font-size: 24px; line-height: 48px; }
  .facts { display: flex; flex-direction: column; gap: 8px; margin: 16px 0 24px; color: #e5e7eb; }
  .white { color: #fff; }
  .orange { color: #f09549; }
  .gain, .blue, .yellow { font-size: 28px; font-weight: 600; }
  .gain { color: #74de8c; }
  .blue { color: #6ba1f4; }
  .yellow { color: #f7cf46; }
  .start { width: 100%; height: 72px; border-radius: 12px; background: #303541; color: #828690; font-size: 28px; font-weight: 500; }

  .mid { padding: 48px; background: #22283680; display: flex; flex-direction: column; align-self: start; }
  .mid-head { display: flex; justify-content: space-between; }
  .sub { margin-top: 8px; color: #d1d5db; }
  .chips { display: flex; gap: 32px; margin-top: 16px; }
  .chips span, .totals p { display: flex; align-items: center; gap: 8px; }
  .c-green, .tec { color: #74de8c; }
  .c-blue, .cre { color: #6ba1f4; }
  .c-purple { color: #ba85f8; }
  .totals { display: flex; flex-direction: column; align-items: flex-end; }
  .total { font-size: 32px; line-height: 48px; font-weight: 700; color: #f7cf46; }
  .work { color: #9ca3af; }
  .cre { margin-top: 16px; }
  .tec { margin-top: 8px; }
  .opportunity {
    display: flex; justify-content: space-between; align-items: flex-start; margin-top: 32px; padding: 32px;
    border: 2px solid #a158f0; border-radius: 16px; background: linear-gradient(90deg, #3b2466, #2b2d6e 55%, #24356f);
  }
  .opportunity h3 { display: flex; align-items: center; gap: 8px; font-size: 32px; line-height: 48px; font-weight: 600; color: #f7cf46; }
  .opportunity p { margin-top: 8px; font-size: 28px; color: #d1d5db; }
  .meter { margin-top: 32px; }
  .meter h4, .meter span, .focus { font-size: 32px; line-height: 48px; font-weight: 600; }
  .meter span { font-size: 31px; font-weight: 400; color: #9ca3af; }
  .bar { height: 24px; margin-top: 16px; border-radius: 12px; overflow: hidden; background: #f1f5f9; }
  .bar div { height: 100%; background: #4ea254; }
  .focus { margin-top: 48px; }
  .sliders { display: flex; flex-direction: column; gap: 20px; margin-top: 32px; }
  .slider { display: flex; flex-direction: column; }
  .slider label { display: flex; align-items: center; gap: 8px; font-size: 31px; line-height: 52px; color: #d1d5db; }
  .slider input { appearance: none; -webkit-appearance: none; width: 100%; height: 40px; margin: 0; background: none; }
  .slider input::-webkit-slider-runnable-track { height: 16px; border-radius: 8px; background: linear-gradient(90deg, #4ea254 var(--p), #f1f5f9 var(--p)); }
  .slider input::-webkit-slider-thumb { -webkit-appearance: none; width: 40px; height: 40px; margin-top: -12px; border: 4px solid #4ea254; border-radius: 50%; background: #fff; }
  .challenge {
    display: flex; align-items: center; justify-content: center; gap: 8px; height: 80px; margin-top: 36px;
    border-radius: 12px; background: linear-gradient(90deg, #8b37e2, #3763e6); font-size: 35px; font-weight: 700; color: #fdf1f6;
  }

  .right { padding: 32px 32px 0; }
  .sections { display: grid; grid-template-columns: repeat(5, minmax(0, 1fr)) 134px; padding: 8px; border-radius: 16px; background: #222836; flex: none; color: #9ca3af; font-size: 24px; line-height: 32px; font-weight: 500; }
  .sections button { display: flex; flex-direction: column; align-items: center; padding: 16px 0; border-radius: 12px; }
  .sections button.active { background: #3963e5; color: #fff; font-weight: 600; }
  .sections span { display: flex; align-items: center; gap: 6px; min-height: 32px; }
  .charts-head { margin: 32px 0; flex: none; }
  .charts-head h2 { display: flex; align-items: center; gap: 8px; font-size: 35px; }
  .pill { padding: 0 20px; border: 2px solid #e2e8f0; border-radius: 22px; font-size: 24px; line-height: 40px; font-weight: 600; color: #020817; }
  .level-pill { border-color: #5e94ee; color: #6ba1f4; }
  .filters { display: flex; flex-wrap: wrap; gap: 16px; flex: none; }
  .filters button { height: 72px; padding: 0 24px; border: 2px solid #e2e8f0; border-radius: 12px; background: #fff; color: #020817; font-size: 28px; font-weight: 500; }
  .filters .on { border: 0; background: #3963e5; color: #fdf1f6; }
  .chart { margin-top: 32px; padding: 32px 32px 0; border: 2px solid #4b5563; border-radius: 16px; background: #1f2634b0; flex: none; }
  .chart h3 { font-size: 32px; line-height: 48px; font-weight: 600; }
  .pills { display: flex; gap: 16px; }
  .chart-sub { margin-top: 24px; color: #9ca3af; }
  .entries { position: relative; display: flex; flex-direction: column; gap: 24px; margin-top: 32px; }
  .thumb { position: absolute; z-index: 1; right: 4px; top: 4px; width: 14px; height: 63px; border-radius: 7px; background: #15191f; }
  .entry { display: grid; grid-template-columns: 146px 180px 22px minmax(0, 1fr); height: 244px; padding: 32px 8px 24px 0; border: 2px solid #3b4250; border-radius: 16px; background: #242a38; font-size: 24px; }
  .entry.top { background: #2b313e; }
  .rank { display: flex; flex-direction: column; align-items: center; justify-content: center; color: #9ca3af; }
  .rank strong { font-size: 48px; line-height: 56px; color: #fff; font-weight: 700; }
  .rank span { font-size: 16px; }
  .art { display: flex; flex-direction: column; align-items: center; }
  .play { position: relative; width: 80px; height: 80px; margin: 24px 0 16px; border-radius: 50%; background: #4b5563; }
  .play svg { display: block; width: 32px; height: 32px; margin: auto; }
  .play i { position: absolute; top: -8px; right: -8px; width: 24px; height: 24px; border-radius: 50%; background: #4a80ee; font-size: 16px; line-height: 24px; font-style: normal; font-weight: 700; text-align: center; }
  .time { font-family: "DejaVu Sans Mono", monospace; font-size: 16px; line-height: 24px; color: #6b7280; }
  .info { grid-column: 4; grid-row: 1; }
  .score { display: flex; align-items: center; gap: 7px; height: 20px; padding-left: 16px; color: #9ca3af; }
  .score svg, .weeks svg { width: 24px; height: 24px; }
  .meta { display: flex; align-items: center; gap: 24px; margin-top: 94px; }
  .genre { height: 68px; padding: 0 17px; border: 2px solid #e2e8f0; border-radius: 34px; line-height: 32px; font-weight: 600; color: #020817; }
  .genre span { display: block; }
  .genre .ico { margin: 4px 0; }
  .weeks { display: flex; align-items: center; gap: 8px; color: #6b7280; }
  .price { grid-column: 4; grid-row: 1; display: flex; flex-direction: column; align-items: flex-end; align-self: start; margin-top: 48px; color: #9ca3af; z-index: 1; }
  .price b { font-weight: 600; }
  .price span { color: #ee7272; }

  /* dock */
  .dock {
    position: absolute; left: 50%; bottom: 10px; transform: translateX(-50%);
    display: flex; align-items: flex-start; gap: 18px; height: 92px; padding: 13px 12px 0;
    border: 2px solid #6a4650; border-radius: 32px;
    background: linear-gradient(90deg, #321824, #3c1a20 45%, #331320 58%, #421a34 75%, #4a1b2e);
  }
  .app-icon { position: relative; width: 56px; height: 56px; flex: none; }
  .app-icon svg { display: block; width: 56px; height: 56px; overflow: visible; }
  .app-icon.open::after { content: ""; position: absolute; left: 24px; top: 65px; width: 8px; height: 8px; border-radius: 50%; background: #c0a0ac; }
  .badge { position: absolute; top: -8px; right: -10px; min-width: 28px; height: 28px; padding: 0 4px; border-radius: 14px; background: #e2493c; font-size: 16px; line-height: 28px; text-align: center; }
  .divider { width: 2px; height: 68px; margin: -3px 6px 0; background: #7d5a6c; }
  .t-jun { font-size: 12px; font-weight: 600; fill: #fff; }
  .t-8 { font-size: 36px; fill: #333; }
  .t-w { font-size: 18px; font-weight: 600; fill: #fff; }
  .t-live { font-size: 23px; fill: #fff; }
</style>
